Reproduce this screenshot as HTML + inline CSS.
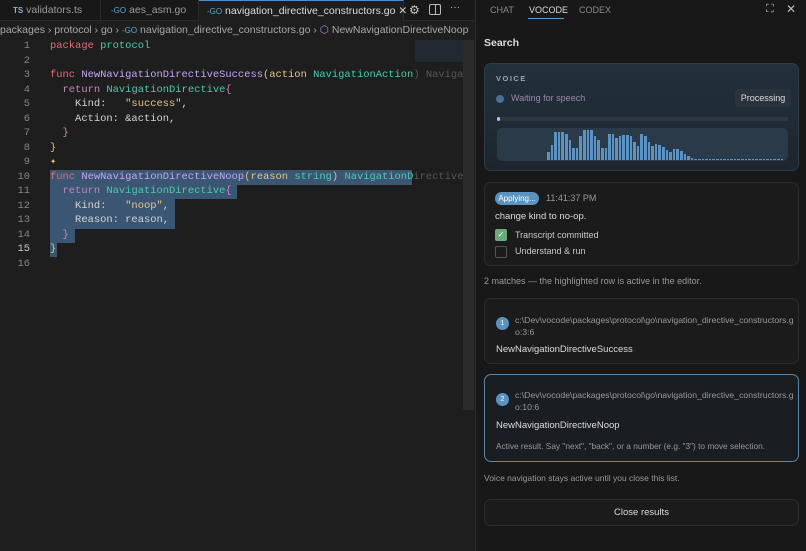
<!DOCTYPE html>
<html><head><meta charset="utf-8"><style>
*{margin:0;padding:0;box-sizing:border-box}
body{width:806px;height:551px;background:#1e1e1e;font-family:"Liberation Sans",sans-serif;position:relative;overflow:hidden;color:#ccc}
.abs{position:absolute}
.tabs{left:0;top:0;width:474px;height:21px;background:#181818;border-bottom:1px solid #2a2a2a}
.tab{position:absolute;top:0;height:21px;font-size:10.5px;color:#9a9a9a;line-height:21px;border-right:1px solid #2a2a2a;white-space:nowrap}
.code{font-family:"Liberation Mono",monospace;font-size:10.45px;white-space:pre;line-height:14.53px}
.ln{left:0;width:30px;text-align:right;color:#858585}
.k{color:#c586c0}.f{color:#c5a5f5}.t{color:#4ec9b0}.s{color:#e8c48a}.p{color:#e5c07b}.w{color:#d4d4d4}.pk{color:#e06c75}
.sel{position:absolute;background:#3a5672}
.panel{left:475px;top:0;width:331px;height:551px;background:#181818;border-left:1px solid #2b2b2b}
.card{position:absolute;left:8px;width:315px;border:1px solid #2c2c2c;border-radius:7px;background:#1b1b1b}
.sm{font-size:9px;color:#c9c9c9}
.path{position:absolute;left:30px;width:280px;font-size:8.7px;color:#999;line-height:12px;word-break:break-all}
</style></head><body>
<div class="abs tabs">
 <div class="tab" style="left:0;width:101px;padding-left:13px"><b style="font-size:8px;color:#8fb0d0">TS</b> validators.ts</div>
 <div class="tab" style="left:101px;width:98px;padding-left:10px"><span style="color:#5fa8d3;font-size:8px">-GO</span> aes_asm.go</div>
 <div class="tab" style="left:199px;width:205px;padding-left:8px;background:#1e1e1e;color:#ddd;border-top:1px solid #4a8fd0"><span style="color:#5fa8d3;font-size:8px">-GO</span> navigation_directive_constructors.go <span style="color:#ccc">✕</span></div>
 <div class="abs" style="left:409px;top:3px;color:#ccc;font-size:12px">⚙</div>
 <div class="abs" style="left:429px;top:4px;width:12px;height:11px;border:1px solid #bbb;border-radius:2px"><div style="position:absolute;left:5px;top:0;width:1px;height:9px;background:#bbb"></div></div>
 <div class="abs" style="left:450px;top:2px;color:#bbb;font-size:10px">···</div>
</div>
<div class="abs" style="left:0;top:24px;font-size:10.5px;color:#a8a8a8;white-space:nowrap">packages › protocol › go › <span style="color:#5fa8d3;font-size:8px">-GO</span> navigation_directive_constructors.go › <span style="color:#b180d7">⬡</span> NewNavigationDirectiveNoop</div>
<div class="abs" style="left:415px;top:40px;width:48px;height:22px;background:#263040;opacity:.6"></div>
<div class="abs" style="left:463px;top:40px;width:11px;height:370px;background:#2b2b2b"></div>
<div class="sel" style="left:50px;top:170px;width:362px;height:15px"></div>
<div class="sel" style="left:50px;top:185px;width:187px;height:14px"></div>
<div class="sel" style="left:50px;top:199px;width:125px;height:30px"></div>
<div class="sel" style="left:50px;top:229px;width:25px;height:14px"></div>
<div class="sel" style="left:50px;top:243px;width:7px;height:14px"></div>
<div class="abs code ln" style="top:39px">1
2
3
4
5
6
7
8
9
10
11
12
13
14
<span style="color:#ccc">15</span>
16</div>
<div class="abs code w" style="left:50px;top:39px"><span class="pk">package</span> <span class="t">protocol</span>

<span class="pk">func</span> <span class="f">NewNavigationDirectiveSuccess</span><span class="p">(</span><span class="s">action</span> <span class="t">NavigationAction</span><span style="color:#555">) Naviga</span>
  <span class="k">return</span> <span class="t">NavigationDirective</span><span class="k">{</span>
    Kind:   <span class="s">"success"</span>,
    Action: &amp;action,
  <span class="k">}</span>
<span class="p">}</span>
<span class="p">✦</span>
<span class="pk">func</span> <span class="f">NewNavigationDirectiveNoop</span><span class="p">(</span><span class="s">reason</span> <span class="t">string</span><span class="p">)</span> <span class="t">NavigationD</span><span style="color:#555">irective</span>
  <span class="k">return</span> <span class="t">NavigationDirective</span><span class="k">{</span>
    Kind:   <span class="s">"noop"</span>,
    Reason: reason,
  <span class="k">}</span>
<span class="p">}</span>
</div>
<div class="abs panel">
 <div class="abs" style="left:14px;top:5px;font-size:9px;color:#8a8a8a">CHAT</div>
 <div class="abs" style="left:53px;top:5px;font-size:9px;color:#ddd">VOCODE</div>
 <div class="abs" style="left:52px;top:18px;width:36px;height:1px;background:#5a9ad0"></div>
 <div class="abs" style="left:103px;top:5px;font-size:9px;color:#8a8a8a">CODEX</div>
 <div class="abs" style="left:290px;top:3px;font-size:11px;color:#bbb">⛶</div>
 <div class="abs" style="left:310px;top:2px;font-size:12px;color:#bbb">✕</div>
 <div class="abs" style="left:8px;top:37px;font-size:10.5px;color:#ddd;font-weight:bold">Search</div>
 <div class="card" style="top:63px;height:108px;background:linear-gradient(180deg,#22303c,#1d262e);border-color:#2e3b46">
  <div class="abs" style="left:11px;top:10px;font-size:7.5px;letter-spacing:1.5px;color:#9aa;font-weight:bold">VOICE</div>
  <div class="abs" style="left:11px;top:31px;width:8px;height:8px;border-radius:50%;background:#4a7090"></div>
  <div class="abs sm" style="left:26px;top:29px;color:#98a">Waiting for speech</div>
  <div class="abs" style="left:250px;top:25px;width:56px;height:18px;background:#2a333b;border-radius:3px;font-size:9px;line-height:18px;text-align:center;color:#ddd">Processing</div>
  <div class="abs" style="left:12px;top:53px;width:291px;height:4px;background:#2d3740;border-radius:2px"><div style="width:3px;height:4px;background:#9cf;border-radius:2px"></div></div>
  <div class="abs" style="left:12px;top:64px;width:291px;height:33px;background:#2a3a48;border-radius:5px;padding:0 0 1px 50px">
   <div style="display:flex;align-items:flex-end;gap:1px;height:32px">
   <script>document.write([8,15,28,28,28,26,20,12,12,24,30,30,30,24,20,12,12,26,26,22,24,25,25,24,18,14,26,24,18,14,16,15,13,10,8,11,11,9,6,4,2,1,1,1,1,1,1,1,1,1,1,1,1,1,1,1,1,1,1,1,1,1,1,1,1,1].map(h=>'<div style="width:2.6px;flex:none;height:'+h+'px;background:#5b93c4"></div>').join(''))</script>
   </div>
  </div>
 </div>
 <div class="card" style="top:182px;height:84px">
  <div class="abs" style="left:10px;top:9px;width:44px;height:13px;border-radius:7px;background:#5a92c0;font-size:8px;color:#fff;text-align:center;line-height:13px">Applying...</div>
  <div class="abs sm" style="left:61px;top:10px;color:#999">11:41:37 PM</div>
  <div class="abs" style="left:10px;top:28px;font-size:9.5px;color:#ddd">change kind to no-op.</div>
  <div class="abs" style="left:10px;top:46px;width:12px;height:12px;background:#6aab7a;border-radius:2px;color:#fff;font-size:8px;text-align:center;line-height:12px">✓</div>
  <div class="abs sm" style="left:30px;top:47px">Transcript committed</div>
  <div class="abs" style="left:10px;top:63px;width:12px;height:12px;border:1px solid #555;border-radius:2px"></div>
  <div class="abs sm" style="left:30px;top:63px">Understand &amp; run</div>
 </div>
 <div class="abs sm" style="left:8px;top:276px;color:#999">2 matches — the highlighted row is active in the editor.</div>
 <div class="card" style="top:298px;height:66px">
  <div class="abs" style="left:11px;top:18px;width:13px;height:13px;border-radius:50%;background:#5a92c0;color:#fff;font-size:7px;text-align:center;line-height:13px">1</div>
  <div class="path" style="top:15px">c:\Dev\vocode\packages\protocol\go\navigation_directive_constructors.go:3:6</div>
  <div class="abs" style="left:11px;top:45px;font-size:9.5px;color:#ddd">NewNavigationDirectiveSuccess</div>
 </div>
 <div class="card" style="top:374px;height:88px;border-color:#5a86a8;background:#1a1d21">
  <div class="abs" style="left:11px;top:18px;width:13px;height:13px;border-radius:50%;background:#5a92c0;color:#fff;font-size:7px;text-align:center;line-height:13px">2</div>
  <div class="path" style="top:14px">c:\Dev\vocode\packages\protocol\go\navigation_directive_constructors.go:10:6</div>
  <div class="abs" style="left:11px;top:45px;font-size:9.5px;color:#ddd">NewNavigationDirectiveNoop</div>
  <div class="abs" style="left:11px;top:66px;font-size:8.3px;color:#999">Active result. Say "next", "back", or a number (e.g. "3") to move selection.</div>
 </div>
 <div class="abs" style="left:8px;top:473px;font-size:8.5px;color:#999">Voice navigation stays active until you close this list.</div>
 <div class="card" style="top:499px;height:27px;font-size:9.5px;color:#ddd;text-align:center;line-height:26px">Close results</div>
</div>
</body></html>
